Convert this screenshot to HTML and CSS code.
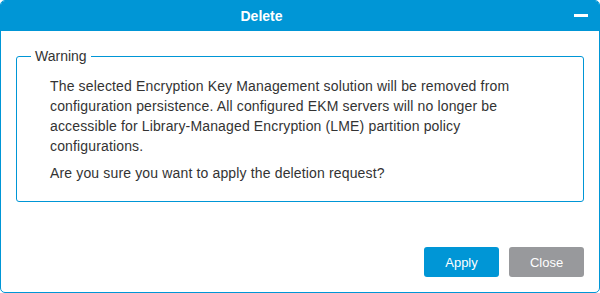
FILE: index.html
```html
<!DOCTYPE html>
<html lang="en">
<head>
    <meta charset="UTF-8">
    <title>Delete</title>
    <link rel="stylesheet" href="styles.css">
</head>
<body>
<div class="dialog">
    <div class="dialog-header">
        <div class="dialog-title">Delete</div>
        <span class="minimize-btn"></span>
    </div>
    <div class="dialog-body">
        <fieldset class="warning-box">
            <legend>Warning</legend>
            <p>The selected Encryption Key Management solution will be removed from configuration persistence. All configured EKM servers will no longer be accessible for Library-Managed Encryption (LME) partition policy configurations.</p>
            <p>Are you sure you want to apply the deletion request?</p>
        </fieldset>
    </div>
    <div class="dialog-footer">
        <button class="btn btn-apply">Apply</button>
        <button class="btn btn-close">Close</button>
    </div>
</div>
</body>
</html>
```

FILE: styles.css
```css
body {
    margin: 0;
    padding: 0;
    font-family: 'Liberation Sans', Arial, sans-serif;
    background: #fff;
}
.dialog {
    width: 600px;
    height: 293px;
    box-sizing: border-box;
    border: 1px solid #0096d6;
    border-radius: 5px;
    overflow: hidden;
    display: flex;
    flex-direction: column;
    background: #fff;
}
.dialog-header {
    height: 30px;
    background: #0096d6;
    display: flex;
    align-items: center;
}
.dialog-title {
    flex: 1;
    text-align: center;
    color: #fff;
    font-size: 14px;
    font-weight: bold;
    padding-right: 52px;
}
.minimize-btn {
    width: 14px;
    height: 3px;
    background: #fff;
    margin-right: 11px;
    margin-bottom: 2px;
}
.dialog-body {
    flex: 1;
    padding: 17px 15px 0 15px;
}
.warning-box {
    margin: 0;
    border: 1px solid #0096d6;
    border-radius: 3px;
    padding: 12px 50px 18px 14px;
    color: #333;
    font-size: 14px;
    letter-spacing: 0.15px;
}
.warning-box legend {
    padding: 0 4px;
    font-size: 14px;
    letter-spacing: 0;
    color: #333;
}
.warning-box p {
    margin: 0 0 0 19px;
    line-height: 20px;
}
.warning-box p + p {
    margin-top: 7px;
}
.dialog-footer {
    display: flex;
    justify-content: flex-end;
    gap: 10px;
    padding: 0 15px 15px 0;
}
.btn {
    width: 75px;
    height: 30px;
    border: none;
    border-radius: 3px;
    color: #fff;
    font-family: 'Liberation Sans', Arial, sans-serif;
    font-size: 13px;
    cursor: pointer;
}
.btn-apply {
    background: #0096d6;
}
.btn-close {
    background: #98999c;
}
```
